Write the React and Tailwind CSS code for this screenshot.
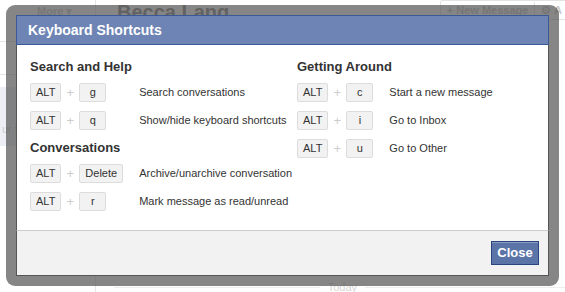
import React from "react";

const leftRows = [
  { title: "Search and Help", items: [["g", "Search conversations"], ["q", "Show/hide keyboard shortcuts"]] },
  { title: "Conversations", items: [["Delete", "Archive/unarchive conversation"], ["r", "Mark message as read/unread"]] },
];

const rightRows = [
  { title: "Getting Around", items: [["c", "Start a new message"], ["i", "Go to Inbox"], ["u", "Go to Other"]] },
];

function Key({ children }) {
  return (
    <span className="inline-flex h-[19px] min-w-[27px] items-center justify-center justify-self-start rounded-[2px] border border-[#dcdcdc] bg-[#f2f2f2] px-[5px] text-[11px] leading-none text-[#333]">
      {children}
    </span>
  );
}

function ShortcutTable({ groups }) {
  return (
    <div className="grid grid-cols-[auto_18px_auto_1fr] items-center gap-y-[9px]">
      {groups.map((g, gi) => (
        <React.Fragment key={g.title}>
          <h3 className={`col-span-4 text-[13px] font-bold leading-[16px] text-[#333] ${gi > 0 ? "mt-px" : ""} -mb-px`}>
            {g.title}
          </h3>
          {g.items.map(([k, label]) => (
            <React.Fragment key={k}>
              <Key>ALT</Key>
              <span className="text-center text-[13px] leading-none text-[#ccc]">+</span>
              <Key>{k}</Key>
              <span className="pl-[16px] text-[11px] text-[#333]">{label}</span>
            </React.Fragment>
          ))}
        </React.Fragment>
      ))}
    </div>
  );
}

export default function App() {
  return (
    <div
      className="relative h-[292px] w-[565px] overflow-hidden bg-white"
      style={{ fontFamily: '"Liberation Sans", Arial, sans-serif' }}
    >
      {/* page behind the dialog */}
      <div className="flex h-full">
        <div className="flex w-[96px] flex-col border-r border-[#e5e5e5]">
          <div className="h-[42px] border-b border-[#e5e5e5] pl-[37px] pt-[3px] text-[11px] font-bold text-[#ccc]">More ▾</div>
          <div className="h-[33px] border-b border-[#e5e5e5]" />
          <div className="mt-[12px] h-[59px] bg-[#eceff5] pl-[2px] pt-[34px] text-[11px] text-[#ccc]">ur th</div>
        </div>
        <div className="flex flex-1 flex-col">
          <div className="flex items-start">
            <span className="ml-[21px] mt-[2px] text-[20px] font-bold leading-none text-[#888]">Becca Lang</span>
            <div className="ml-auto mr-[-4px] flex h-[20px] items-center rounded-[2px] border border-[#e3e3e3] text-[11px] font-bold text-[#c8c8c8]">
              <span className="px-[6px]">+ New Message</span>
              <span className="border-l border-[#e3e3e3] px-[6px]">⚙ A</span>
            </div>
          </div>
          <div className="mt-auto flex items-center gap-2 pb-px pl-[18px]">
            <div className="h-px flex-1 bg-[#eeeeee]" />
            <span className="text-[11px] leading-[8px] text-[#d5d5d5]">Today</span>
            <div className="h-px w-[200px] bg-[#eeeeee]" />
          </div>
        </div>
      </div>

      {/* dialog */}
      <div className="absolute left-[6px] top-[5px] h-[281px] w-[553px] rounded-[9px] bg-[rgba(82,82,82,0.7)] p-[10px]">
        <div className="flex h-full flex-col">
          <div className="flex h-[30px] items-center border border-[#3b5998] bg-[#6d84b4] pl-[11px] text-[14px] font-bold text-white">
            Keyboard Shortcuts
          </div>
          <div className="flex flex-1 border-x border-[#555] bg-white pl-[13px] pt-[14px]">
            <div className="w-[267px]">
              <ShortcutTable groups={leftRows} />
            </div>
            <div className="flex-1">
              <ShortcutTable groups={rightRows} />
            </div>
          </div>
          <div className="flex h-[46px] justify-end border border-t-[#ccc] border-x-[#555] border-b-[#555] bg-[#f2f2f2] pr-[9px] pt-[10px]">
            <button className="h-[24px] w-[48px] border border-[#29447e] bg-[#5b74a8] text-[13px] font-bold text-white shadow-[inset_0_1px_0_#8a9cc2]">
              Close
            </button>
          </div>
        </div>
      </div>
    </div>
  );
}
